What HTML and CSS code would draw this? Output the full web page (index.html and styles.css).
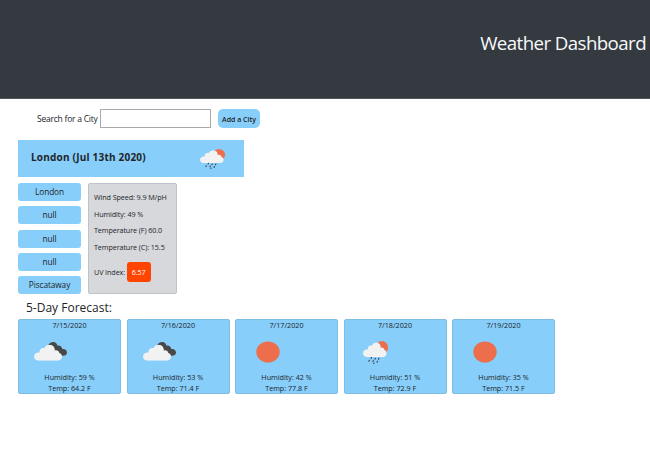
FILE: index.html
```html
<!DOCTYPE html>
<html lang="en">
<head>
<meta charset="utf-8">
<title>Weather Dashboard</title>
<link rel="stylesheet" href="styles.css">
</head>
<body>
<svg class="defs" aria-hidden="true">
  <symbol id="cloud" viewBox="0 0 28 16" preserveAspectRatio="none"><path d="M5 16C2 16 0 14 0 11.700 0 9.500 1.900 7.600 4.300 7.600H5.500C5.200 4.500 8 2.600 10.500 3.300 11.700 1 13.200 0 15.500 0 19 0 21 2.600 20.800 5.700 23 5 25 6.300 25.300 8.200 27 8.600 28 10 28 11.800 28 14.200 26 16 23.500 16Z"/></symbol>
  <symbol id="rain" viewBox="0 0 26 22" preserveAspectRatio="none">
    <circle class="sun" cx="18.900" cy="6.300" r="6.200"/>
    <use class="white" href="#cloud" x="0" y="1.500" width="23.800" height="14"/>
    <path class="drops" d="M8.500 15.700l-.4.900M12.300 16.500l-.4.900M15.900 16.500l-.4.900M6.300 18.500l-.4.900M10.300 18.700l-.4.900M14.500 19.300l-.5 1M11 21l-.2.400"/>
  </symbol>
  <symbol id="clouds" viewBox="0 0 33 19">
    <path class="dark" d="M14 4C15 1 17 0 19 0 21.500 0 23 1.500 23.500 3.700 25.500 3 28 4.500 28.300 7 31 6.500 33 8.500 33 10.500 33 12.700 31.300 13.700 29 13.700H22Z"/>
    <use class="white" href="#cloud" x="0" y="2.800" width="28" height="16"/>
  </symbol>
  <symbol id="clear" viewBox="0 0 24 22" preserveAspectRatio="none"><ellipse class="sun" cx="12" cy="11" rx="11.700" ry="10.500"/></symbol>
</svg>
<header class="top"><h1>Weather Dashboard</h1></header>
<main>
  <form class="search">
    <label for="city">Search for a City</label>
    <input id="city" type="text">
    <button type="button">Add a City</button>
  </form>
  <section class="banner">
    <h2>London (Jul 13th 2020)</h2>
    <svg class="now"><use href="#rain"/></svg>
  </section>
  <div class="current">
    <div class="cities">
      <div class="city">London</div>
      <div class="city">null</div>
      <div class="city">null</div>
      <div class="city">null</div>
      <div class="city">Piscataway</div>
    </div>
    <div class="details">
      <p>Wind Speed: 9.9 M/pH</p>
      <p>Humidity: 49 %</p>
      <p>Temperature (F) 60.0</p>
      <p>Temperature (C): 15.5</p>
      <p class="uv">UV Index: <span class="badge">6.57</span></p>
    </div>
  </div>
  <h3>5-Day Forecast:</h3>
  <div class="forecast">
    <article class="day"><div>7/15/2020</div><svg class="clouds"><use href="#clouds"/></svg><div>Humidity: 59 %</div><div>Temp: 64.2 F</div></article>
    <article class="day"><div>7/16/2020</div><svg class="clouds"><use href="#clouds"/></svg><div>Humidity: 53 %</div><div>Temp: 71.4 F</div></article>
    <article class="day"><div>7/17/2020</div><svg class="clear"><use href="#clear"/></svg><div>Humidity: 42 %</div><div>Temp: 77.8 F</div></article>
    <article class="day"><div>7/18/2020</div><svg class="rain"><use href="#rain"/></svg><div>Humidity: 51 %</div><div>Temp: 72.9 F</div></article>
    <article class="day"><div>7/19/2020</div><svg class="clear"><use href="#clear"/></svg><div>Humidity: 35 %</div><div>Temp: 71.5 F</div></article>
  </div>
</main>
</body>
</html>
```
FILE: styles.css
```css
* { box-sizing: border-box; }
body { margin: 0; height: 450px; overflow: hidden; background: #fff; color: #212529; font-family: "Open Sans", "Noto Sans", sans-serif; font-size: 8px; }
h1, h2, h3, p { margin: 0; font-weight: 400; }
.defs { display: none; }
.sun { fill: #ec6e4c; }
.white { fill: #f2f2f2; }
.dark { fill: #484848; }
.drops { fill: none; stroke: #36424b; stroke-width: 1.100; stroke-linecap: round; }
.top { height: 99px; padding: 29px 4px 0 0; background: #343a40; border-bottom: 1px solid #55595e; text-align: right; }
h1 { color: #f8f9fa; font-size: 18.700px; line-height: 28px; letter-spacing: -0.580px; }
main { padding: 10px 0 0 18px; }
.search { display: flex; align-items: center; height: 19px; padding-left: 19px; }
.search label { width: 63px; font-size: 8.500px; letter-spacing: -0.230px; white-space: nowrap; }
.search input { width: 111px; height: 19px; padding: 0; border: 1px solid #aaa; background: #fff; }
.search button { width: 42px; height: 19px; margin-left: 7px; padding: 1px 0 0; border: 0; border-radius: 5px; background: #87cefa; color: #212529; font: 600 7px "Open Sans", sans-serif; white-space: nowrap; }
.banner { display: flex; justify-content: space-between; width: 226px; height: 37px; margin-top: 12px; padding: 8px 18px 0 13px; background: #87cefa; }
h2 { font-size: 10px; font-weight: 700; line-height: 19px; letter-spacing: 0.210px; white-space: nowrap; }
.now { width: 26px; height: 20px; margin-top: 1px; }
.current { display: flex; gap: 7px; margin-top: 6px; }
.cities { display: grid; gap: 5.250px; width: 63px; }
.city { height: 18px; border-radius: 3px; background: #87cefa; font-size: 8.300px; line-height: 18px; letter-spacing: -0.100px; text-align: center; }
.details { width: 89px; height: 111px; padding: 5px 0 0 5px; border: 1px solid #bfc3c8; border-radius: 2px; background: #d6d8db; font-size: 7.200px; line-height: 16.500px; letter-spacing: -0.090px; white-space: nowrap; }
.uv { display: flex; align-items: center; gap: 1.500px; height: 20px; margin-top: 7px; }
.badge { width: 24px; height: 20px; border-radius: 3px; background: #ff4500; color: #fff; line-height: 20px; text-align: center; }
h3 { margin-top: 6px; padding-left: 8px; font-size: 12px; line-height: 16px; }
.forecast { display: flex; gap: 5.500px; margin-top: 3px; }
.day { width: 103px; height: 75px; border: 1px solid #7fbde2; border-radius: 2px; background: #87cefa; font-size: 7.200px; line-height: 10.500px; text-align: center; }
.day svg { display: block; height: 23px; margin: 10px 0 8.500px 16px; }
.clouds { width: 33px; }
.day .clouds { height: 19px; margin: 11px 0 11.500px 15px; }
.clear { width: 24px; }
.day .clear { height: 22px; margin: 10px 0 9.500px 19.500px; }
.rain { width: 26px; }
.day .rain { margin-left: 18px; }
```
